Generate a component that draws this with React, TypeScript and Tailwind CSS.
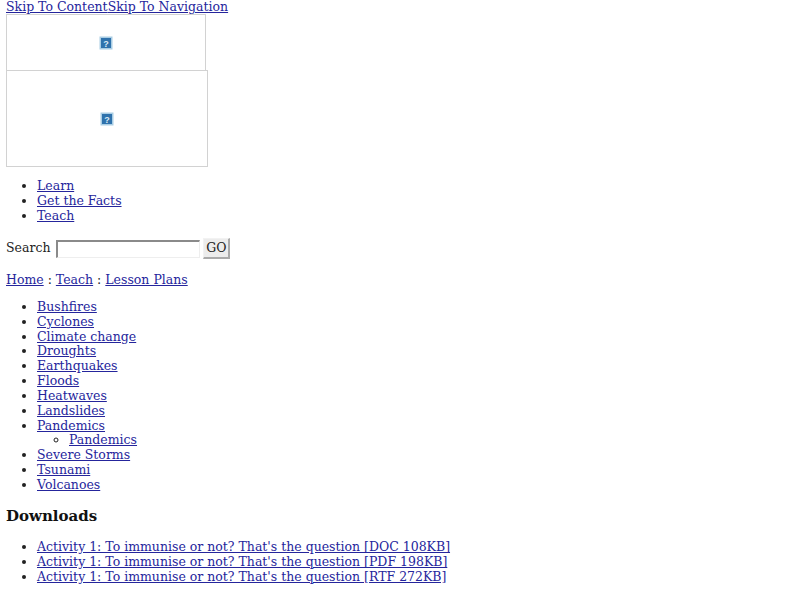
const font = "font-['DejaVu_Serif',serif]";

const hazards = ['Bushfires', 'Cyclones', 'Climate change', 'Droughts', 'Earthquakes', 'Floods', 'Heatwaves', 'Landslides', 'Pandemics'];
const hazardsAfter = ['Severe Storms', 'Tsunami', 'Volcanoes'];
const downloads = [
  "Activity 1: To immunise or not? That's the question [DOC 108KB]",
  "Activity 1: To immunise or not? That's the question [PDF 198KB]",
  "Activity 1: To immunise or not? That's the question [RTF 272KB]",
];

function Link({ children }: { children: React.ReactNode }) {
  return <a href="#" className="text-[#25259c] underline">{children}</a>;
}

function BrokenImage({ className }: { className: string }) {
  return (
    <div className={`flex items-center justify-center border border-[#d2d2d2] bg-white ${className}`}>
      <svg width="14" height="14" viewBox="0 0 14 14">
        <rect x="0.5" y="0.5" width="13" height="13" fill="#a9cde4" />
        <rect x="2" y="2" width="10" height="10" fill="#2f72ac" />
        <text x="7" y="10.5" textAnchor="middle" fontSize="9" fontWeight="bold" fill="#dcebf5" fontFamily="Liberation Sans, sans-serif">?</text>
      </svg>
    </div>
  );
}

export default function App() {
  return (
    <div className={`${font} min-h-[600px] bg-white px-[6px] text-[12.5px] leading-[14.85px] text-[#222]`}>
      <div className="h-[14px]">
        <Link>Skip To Content</Link>
        <Link>Skip To Navigation</Link>
      </div>
      <BrokenImage className="h-[57px] w-[200px]" />
      <BrokenImage className="-mt-px h-[97px] w-[202px]" />

      <ul className="mt-[12px] list-disc pl-[31px]">
        <li><Link>Learn</Link></li>
        <li><Link>Get the Facts</Link></li>
        <li><Link>Teach</Link></li>
      </ul>

      <div className="mt-[14px] flex h-[22px] items-center">
        <span>Search</span>
        <input className="ml-[6px] h-[18px] w-[144px] border border-t-2 border-l-2 border-[#8a8a8a] border-r-[#eee] border-b-[#eee] bg-white" />
        <button className="ml-[3px] h-[21px] w-[27px] border border-r-2 border-b-2 border-[#f2f2f2] border-r-[#aaa] border-b-[#aaa] bg-[#ececec] text-center text-[12.5px]">GO</button>
      </div>

      <div className="mt-[13px]">
        <Link>Home</Link> : <Link>Teach</Link> : <Link>Lesson Plans</Link>
      </div>

      <ul className="mt-[12.5px] list-disc pl-[31px]">
        {hazards.map((h) => (
          <li key={h}><Link>{h}</Link></li>
        ))}
        <ul className="list-[circle] pl-[32px]">
          <li><Link>Pandemics</Link></li>
        </ul>
        {hazardsAfter.map((h) => (
          <li key={h}><Link>{h}</Link></li>
        ))}
      </ul>

      <h2 className="mt-[14.5px] text-[15px] leading-[18px] font-bold text-[#111]">Downloads</h2>

      <ul className="mt-[15px] list-disc pl-[31px]">
        {downloads.map((d) => (
          <li key={d}><Link>{d}</Link></li>
        ))}
      </ul>
    </div>
  );
}
